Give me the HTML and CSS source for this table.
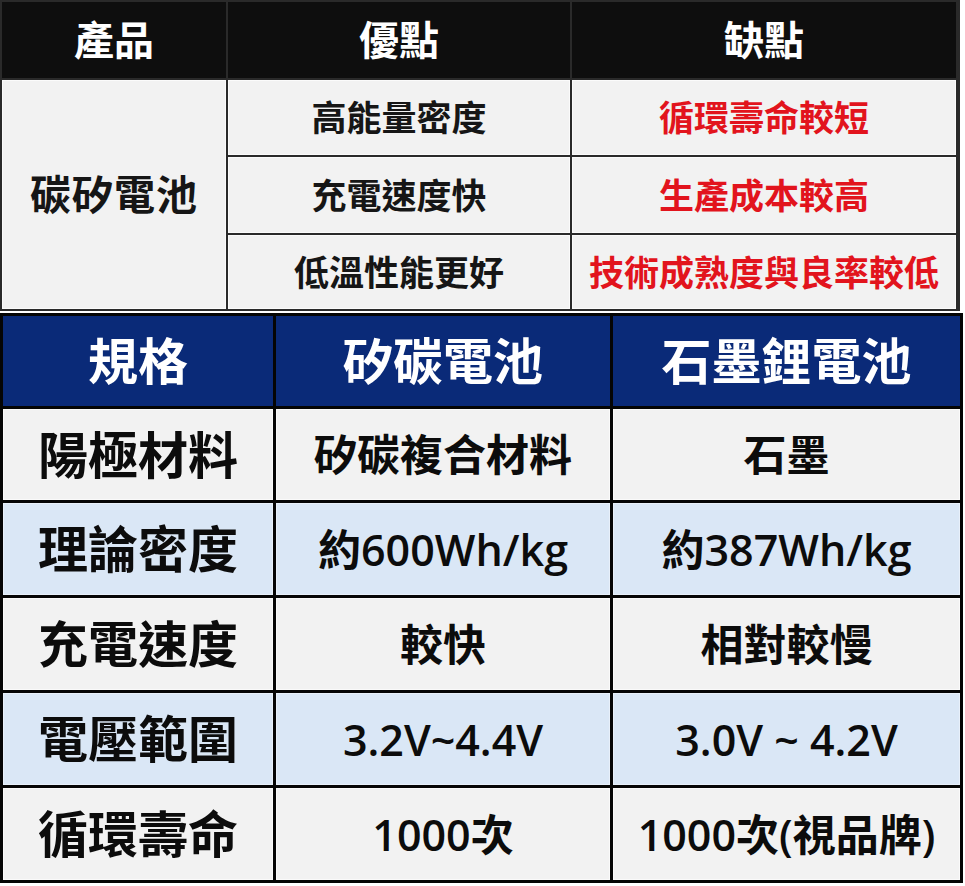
FILE: index.html
```html
<!DOCTYPE html>
<html lang="zh-Hant">
<head>
<meta charset="utf-8">
<title>碳矽電池比較</title>
<link rel="stylesheet" href="styles.css">
</head>
<body>
<div class="page">
  <div class="pros-cons">
    <div class="cell head">產品</div>
    <div class="cell head">優點</div>
    <div class="cell head">缺點</div>
    <div class="cell product">碳矽電池</div>
    <div class="cell">高能量密度</div>
    <div class="cell con">循環壽命較短</div>
    <div class="cell">充電速度快</div>
    <div class="cell con">生產成本較高</div>
    <div class="cell">低溫性能更好</div>
    <div class="cell con">技術成熟度與良率較低</div>
  </div>
  <div class="spec">
    <div class="scell shead">規格</div>
    <div class="scell shead">矽碳電池</div>
    <div class="scell shead">石墨鋰電池</div>

    <div class="scell label">陽極材料</div>
    <div class="scell">矽碳複合材料</div>
    <div class="scell">石墨</div>

    <div class="scell label blue">理論密度</div>
    <div class="scell blue">約<span class="num">600Wh/kg</span></div>
    <div class="scell blue">約<span class="num">387Wh/kg</span></div>

    <div class="scell label">充電速度</div>
    <div class="scell">較快</div>
    <div class="scell">相對較慢</div>

    <div class="scell label blue">電壓範圍</div>
    <div class="scell blue"><span class="num">3.2V~4.4V</span></div>
    <div class="scell blue"><span class="num">3.0V ~ 4.2V</span></div>

    <div class="scell label">循環壽命</div>
    <div class="scell"><span class="num">1000</span>次</div>
    <div class="scell"><span class="num">1000</span>次<span class="num">(</span>視品牌<span class="num">)</span></div>
  </div>
</div>
</body>
</html>
```
FILE: styles.css
```css
html, body {
  margin: 0;
  padding: 0;
  background: #ffffff;
}

body {
  font-family: "Open Sans", "Noto Sans CJK TC", sans-serif;
  width: 965px;
  height: 886px;
  overflow: hidden;
}

.page {
  display: flex;
  flex-direction: column;
  gap: 2px;
}

.pros-cons {
  width: 956px;
  display: grid;
  grid-template-columns: 224px 342px 384px;
  grid-template-rows: 76px 75px 76px 74px;
  gap: 2px;
  padding: 2px;
  background: #2a2a2a;
}

.cell {
  display: flex;
  align-items: center;
  justify-content: center;
  background: #f2f2f2;
  box-shadow: inset 0 0 0 1px #fbfbfb;
  color: #161616;
  font-size: 35px;
  font-weight: 700;
  line-height: 1;
  white-space: nowrap;
}

.cell.head {
  background: #0e0e0e;
  box-shadow: none;
  color: #ffffff;
  font-size: 40px;
}

.cell.product {
  grid-row: 2 / span 3;
  font-size: 41px;
  letter-spacing: 1px;
}

.cell.con {
  color: #e2141d;
}

.spec {
  width: 957px;
  display: grid;
  grid-template-columns: 270px 334px 347px;
  grid-template-rows: 90px 91px 92px 92px 92px 92px;
  gap: 3px;
  padding: 3px;
  background: #050505;
}

.scell {
  display: flex;
  align-items: center;
  justify-content: center;
  background: #f2f2f2;
  box-shadow: inset 0 0 0 1px #fafafa;
  color: #0c0c0c;
  font-size: 43px;
  font-weight: 700;
  line-height: 1;
  white-space: nowrap;
}

.num {
  font-weight: 600;
}

.scell.shead {
  background: #0a2a78;
  box-shadow: none;
  color: #ffffff;
  font-size: 50px;
}

.scell.label {
  font-size: 50px;
}

.scell.blue {
  background: #dae7f6;
  box-shadow: inset 0 0 0 1px #e8f0fa;
}
```
